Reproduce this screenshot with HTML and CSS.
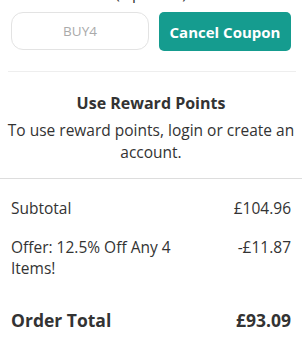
FILE: index.html
```html
<!DOCTYPE html>
<html>
<head>
<meta charset="utf-8">
<link rel="stylesheet" href="styles.css">
</head>
<body>
<div class="page">
  <div class="coupon-label">(Optional)</div>
  <div class="coupon-row">
    <input class="coupon-input" type="text" placeholder="BUY4">
    <button class="coupon-btn">Cancel Coupon</button>
  </div>
  <hr class="divider">
  <div class="reward">
    <div class="reward-title">Use Reward Points</div>
    <div class="reward-text">To use reward points, login or create an account.</div>
  </div>
  <div class="totals">
    <div class="row">
      <div class="label">Subtotal</div>
      <div class="value">£104.96</div>
    </div>
    <div class="row">
      <div class="label">Offer: 12.5% Off Any 4 Items!</div>
      <div class="value">-£11.87</div>
    </div>
    <div class="row total">
      <div class="label">Order Total</div>
      <div class="value">£93.09</div>
    </div>
  </div>
</div>
</body>
</html>
```
FILE: styles.css
```css
* { box-sizing: border-box; }
html, body { margin: 0; padding: 0; background: #fff; }
body { font-family: "Open Sans", sans-serif; color: #333; }
.page { width: 302px; margin-top: -18px; }
.coupon-label { text-align: center; font-size: 15.5px; line-height: 22px; color: #333; }
.coupon-row { display: flex; gap: 10px; padding: 8px 11px 0 11px; }
.coupon-input {
  width: 138px; height: 38px; border: 1px solid #e3e3e3; border-radius: 12px;
  font-family: "Open Sans", sans-serif; font-size: 13.5px; text-align: center; color: #333;
  padding: 0; outline: none;
}
.coupon-input::placeholder { color: #aaa; }
.coupon-btn {
  width: 132px; height: 39px; border: none; border-radius: 5px; background: #159c8f;
  color: #fff; font-family: "Open Sans", sans-serif; font-weight: 700; font-size: 15px; padding: 0;
}
.divider { border: none; border-top: 1px solid #eee; margin: 20px 6px 0 8px; }
.reward { text-align: center; padding: 20px 2px 15px 2px; border-bottom: 1px solid #ddd; }
.reward-title { font-weight: 700; font-size: 16px; line-height: 22px; margin-bottom: 5px; }
.reward-text { font-size: 15.5px; line-height: 22px; }
.totals { padding: 19px 11px 0 11px; }
.row { display: flex; justify-content: space-between; align-items: flex-start; font-size: 15.5px; line-height: 21px; margin-bottom: 18px; }
.row .label { max-width: 190px; }
.row.total { font-weight: 700; font-size: 17.5px; line-height: 22px; margin-top: 30px; }
```
